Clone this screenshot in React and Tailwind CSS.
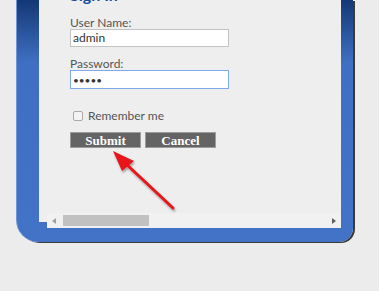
import { useState } from "react";

export default function App() {
  const [user, setUser] = useState("admin");
  const [pass, setPass] = useState("admin");
  const [remember, setRemember] = useState(false);

  return (
    <div className="relative w-[379px] h-[291px] overflow-hidden bg-[#ececec] pl-[16px] font-['Lato','Open_Sans',sans-serif]">
      {/* blue frame */}
      <div className="w-[337px] h-[242px] pl-[22px] pr-[12px] pb-[14px] rounded-bl-[22px] rounded-br-[14px] bg-[linear-gradient(to_bottom,#133875,#3f6fc2_62px,#4373c7)] shadow-[2px_1px_0_#3a3a3a] border-l border-[#6f95d6]">
        <div className="flex flex-col h-full">
          {/* form area */}
          <div className="flex-1 bg-[#eeeeee] pl-[31px] overflow-hidden">
            <h2 className="-mt-[13px] h-[16px] text-[16px] leading-[16px] font-bold text-[#1d4d9e]">Sign In</h2>

            <label className="block mt-[13px] text-[12px] leading-[13px] text-[#555]">User Name:</label>
            <input
              value={user}
              onChange={(e) => setUser(e.target.value)}
              className="block mt-[0px] w-[159px] h-[18px] px-[2px] bg-white border border-[#c3c3c3] text-[12px] text-[#333] outline-none"
            />

            <label className="block mt-[10px] text-[12px] leading-[13px] text-[#555]">Password:</label>
            <input
              type="password"
              value={pass}
              onChange={(e) => setPass(e.target.value)}
              className="block mt-[0px] w-[159px] h-[19px] px-[2px] bg-white border border-[#7fa9ea] text-[10px] text-[#333] outline-none"
            />

            <label className="flex items-center mt-[20px] ml-[3px] gap-[5px] text-[12px] leading-[14px] text-[#555]">
              <span
                onClick={() => setRemember(!remember)}
                className="w-[10px] h-[10px] rounded-[2px] border border-[#a9a9a9] bg-[#f3f3f3]"
              />
              Remember me
            </label>

            <div className="flex gap-[4px] mt-[9px]">
              <button className="w-[71px] h-[16px] bg-[#646464] border border-[#9c9c9c] text-white text-[13px] leading-[13px] font-bold font-['Liberation_Serif',serif]">
                Submit
              </button>
              <button className="w-[71px] h-[16px] bg-[#646464] border border-[#9c9c9c] text-white text-[13px] leading-[13px] font-bold font-['Liberation_Serif',serif]">
                Cancel
              </button>
            </div>
          </div>

          {/* horizontal scrollbar */}
          <div className="flex h-[15px]">
            <div className="w-[8px] h-[9px] bg-[#eeeeee]" />
            <div className="flex-1 flex items-center bg-[#f1f1f1]">
              <span className="ml-[5px] w-0 h-0 border-y-[3px] border-y-transparent border-r-[4px] border-r-[#a0a0a0]" />
              <span className="ml-[7px] w-[86px] h-[11px] bg-[#c1c1c1]" />
              <span className="ml-auto mr-[5px] w-0 h-0 border-y-[3px] border-y-transparent border-l-[4px] border-l-[#606060]" />
            </div>
          </div>
        </div>
      </div>

      {/* red arrow pointing at Submit */}
      <svg className="absolute left-0 top-0 pointer-events-none" width="379" height="291">
        <defs>
          <filter id="sh" x="-20%" y="-20%" width="140%" height="140%">
            <feDropShadow dx="1" dy="2" stdDeviation="1.2" floodColor="#000" floodOpacity="0.35" />
          </filter>
        </defs>
        <g filter="url(#sh)">
          <line x1="173" y1="208" x2="124" y2="162" stroke="#e8141b" strokeWidth="3" strokeLinecap="round" />
          <polygon points="113,151 134,161 122,171" fill="#e8141b" />
        </g>
      </svg>
    </div>
  );
}
